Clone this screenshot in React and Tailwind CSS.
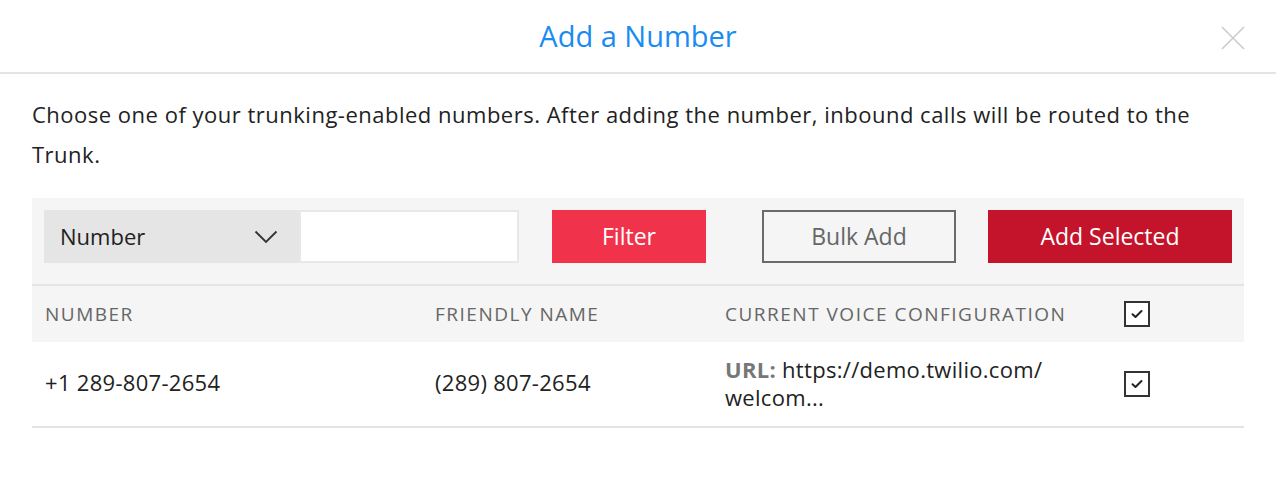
const CheckBox = () => (
  <div className="w-[26px] h-[26px] border-2 border-[#333] bg-white flex items-center justify-center">
    <svg width="12" height="10" viewBox="0 0 12 10" fill="none">
      <path d="M1.5 5.2 L4.5 8 L10.5 2" stroke="#222" strokeWidth="2" strokeLinecap="round" strokeLinejoin="round" />
    </svg>
  </div>
);

const App = () => {
  return (
    <div className="w-[1276px] h-[482px] bg-white text-[#222] font-['Open_Sans',sans-serif]">
      {/* Header */}
      <div className="relative h-[74px] border-b-2 border-[#e4e4e4] flex items-center justify-center">
        <h1 className="text-[29px] text-[#1a8cf0] font-normal">Add a Number</h1>
        <button className="absolute right-[31px] top-[26px]">
          <svg width="24" height="24" viewBox="0 0 24 24" fill="none">
            <path d="M1 1 L23 23 M23 1 L1 23" stroke="#cccccc" strokeWidth="1.6" />
          </svg>
        </button>
      </div>

      <div className="px-[32px]">
        <p className="text-[22px] tracking-[0.5px] leading-[40px] pt-[20px] pb-[24px] max-w-[1180px]">
          Choose one of your trunking-enabled numbers. After adding the number, inbound calls will be routed to the Trunk.
        </p>

        {/* Toolbar */}
        <div className="bg-[#f5f5f5] h-[86px] flex items-start pt-[12px] px-[12px]">
          <div className="w-[255px] h-[53px] bg-[#e5e5e5] flex items-center justify-between pl-[16px] pr-[21px]">
            <span className="text-[22px]">Number</span>
            <svg width="24" height="14" viewBox="0 0 24 14" fill="none">
              <path d="M1.5 1.5 L12 12 L22.5 1.5" stroke="#333" strokeWidth="1.8" />
            </svg>
          </div>
          <div className="w-[220px] h-[53px] bg-white border-2 border-[#e8e8e8]"></div>
          <button className="ml-[33px] w-[154px] h-[53px] bg-[#f0334b] text-white text-[23px]">Filter</button>
          <button className="ml-[56px] w-[194px] h-[53px] border-2 border-[#6b6b6b] text-[#666] text-[23px]">Bulk Add</button>
          <button className="ml-[32px] w-[244px] h-[53px] bg-[#c4142c] text-white text-[23px]">Add Selected</button>
        </div>

        {/* Table */}
        <div className="border-t-2 border-[#e4e4e4] bg-[#f5f5f5] h-[58px] grid grid-cols-[390px_290px_399px_107px] items-center px-[13px] text-[19px] tracking-[1.5px] text-[#666]">
          <span>NUMBER</span>
          <span>FRIENDLY NAME</span>
          <span>CURRENT VOICE CONFIGURATION</span>
          <CheckBox />
        </div>
        <div className="border-b-2 border-[#e4e4e4] h-[86px] grid grid-cols-[390px_290px_399px_107px] items-center px-[13px] text-[22px] tracking-[0.3px]">
          <span className="-mt-[3px]">+1 289-807-2654</span>
          <span className="-mt-[3px]">(289) 807-2654</span>
          <span className="leading-[28px] max-w-[360px] -mt-[3px]">
            <b className="text-[#777] font-bold">URL:</b> https://demo.twilio.com/<wbr />welcom...
          </span>
          <CheckBox />
        </div>
      </div>
    </div>
  );
};

export default App;
